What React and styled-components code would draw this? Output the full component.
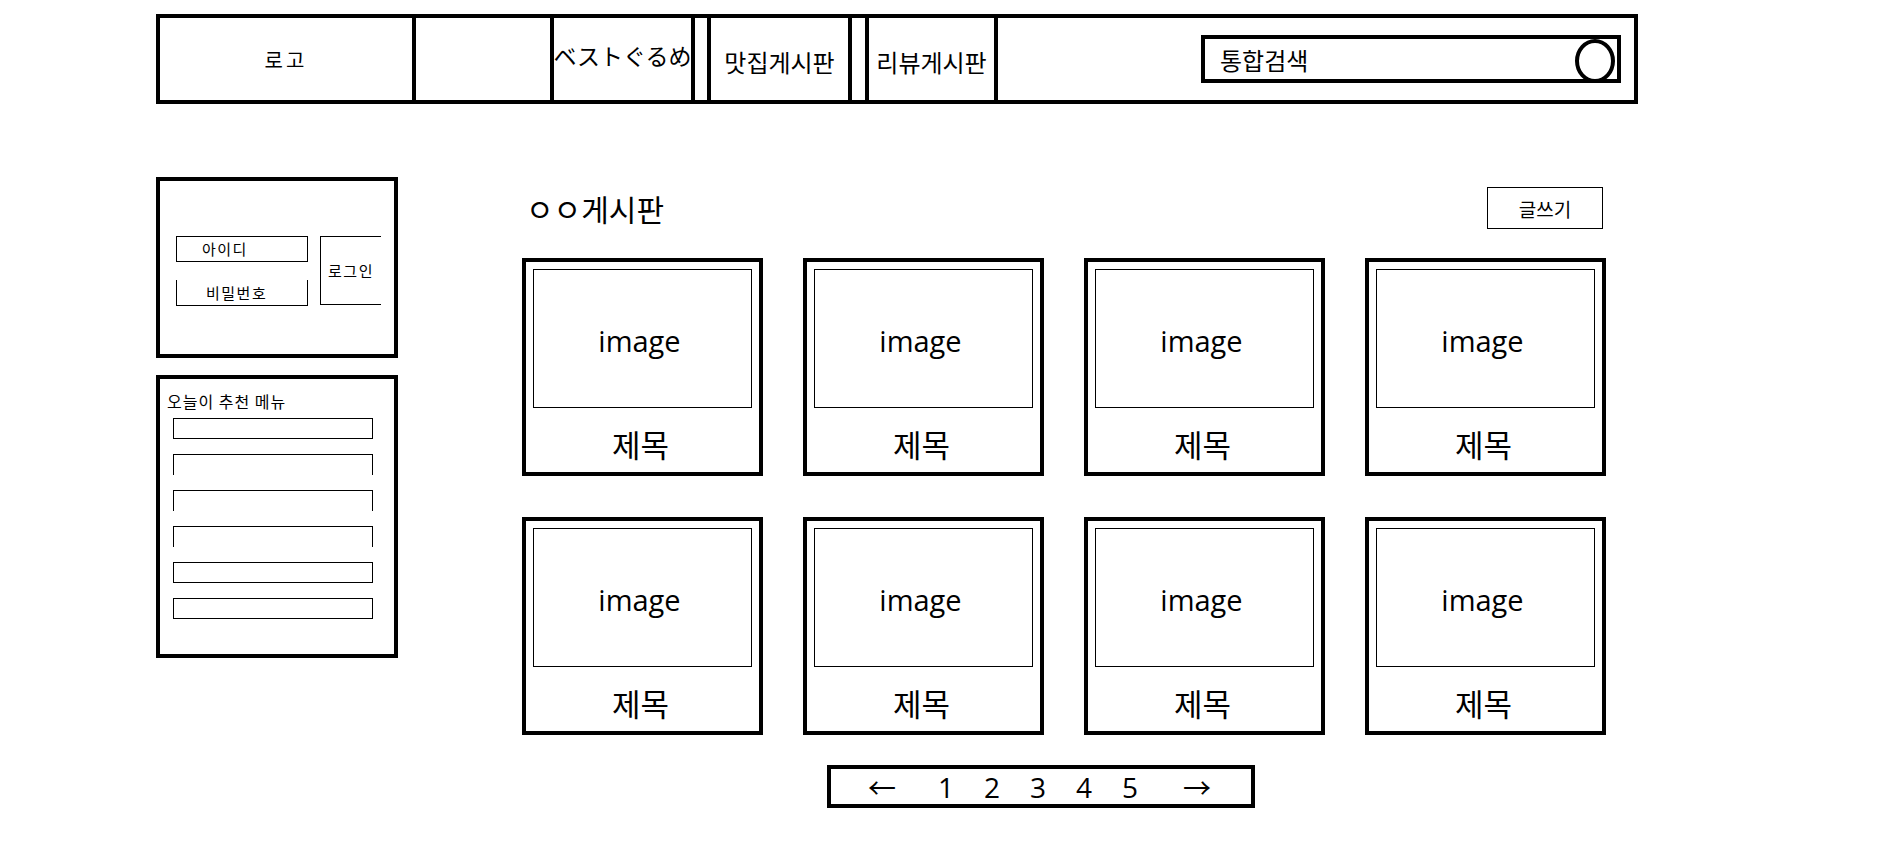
import React from "react";
import styled, { createGlobalStyle } from "styled-components";

const GlobalStyle = createGlobalStyle`
  html, body { margin: 0; padding: 0; background: #fff; }
  body { font-family: "Noto Sans CJK KR", "Noto Sans", sans-serif; color: #000; }
  * { box-sizing: border-box; }
`;

const Page = styled.div`
  width: 1900px;
  padding: 14px 0 40px 156px;
`;

const Header = styled.header`
  display: flex;
  width: 1482px;
  height: 90px;
  border: 4px solid #000;
`;

const Cell = styled.div`
  display: flex;
  align-items: center;
  justify-content: ${(p) => (p.$end ? "flex-end" : "center")};
  flex: ${(p) => (p.$grow ? "1" : "none")};
  width: ${(p) => (p.$w ? `${p.$w}px` : "auto")};
  border-right: ${(p) => (p.$last ? "none" : "4px solid #000")};
  padding: ${(p) => p.$pad || "0"};
  font-size: ${(p) => p.$size || 24}px;
  white-space: nowrap;
`;

const LogoText = styled.span`
  font-size: 20px;
  letter-spacing: 3px;
`;

const SearchBox = styled.div`
  display: flex;
  align-items: center;
  justify-content: space-between;
  width: 420px;
  height: 48px;
  border: 4px solid #000;
  padding: 0 2px 0 15px;
  font-size: 24px;
`;

const SearchCircle = styled.span`
  width: 40px;
  height: 44px;
  margin-top: 3px;
  border: 4px solid #000;
  border-radius: 50%;
`;

const Body = styled.div`
  display: flex;
  margin-top: 73px;
`;

const Sidebar = styled.aside`
  display: flex;
  flex-direction: column;
  gap: 17px;
  width: 242px;
`;

const LoginBox = styled.div`
  display: flex;
  align-items: center;
  gap: 12px;
  height: 181px;
  border: 4px solid #000;
  padding: 6px 0 0 16px;
`;

const Fields = styled.div`
  display: flex;
  flex-direction: column;
  gap: 18px;
`;

const Field = styled.div`
  display: flex;
  align-items: center;
  width: 132px;
  height: 26px;
  border: 1px solid #000;
  border-top: ${(p) => (p.$noTop ? "none" : "1px solid #000")};
  padding-left: ${(p) => p.$indent}px;
  font-size: 15px;
  letter-spacing: 1.5px;
`;

const LoginButton = styled.div`
  display: flex;
  align-items: center;
  justify-content: center;
  width: 61px;
  height: 69px;
  border: 1px solid #000;
  border-right: none;
  font-size: 15px;
  letter-spacing: 1.5px;
`;

const MenuBox = styled.div`
  height: 283px;
  border: 4px solid #000;
  padding: 10px 0 0 7px;
`;

const MenuTitle = styled.div`
  font-size: 16px;
  line-height: 24px;
  letter-spacing: 1px;
  margin-bottom: 5px;
`;

const MenuList = styled.div`
  display: flex;
  flex-direction: column;
  gap: 15px;
  padding-left: 6px;
`;

const MenuRow = styled.div`
  width: 200px;
  height: 21px;
  border: 1px solid #000;
  border-bottom: ${(p) => (p.$open ? "none" : "1px solid #000")};
`;

const Main = styled.main`
  width: 1088px;
  margin-left: 123px;
`;

const MainHead = styled.div`
  display: flex;
  align-items: center;
  justify-content: space-between;
  height: 42px;
  margin-top: 10px;
  padding-right: 6px;
`;

const BoardTitle = styled.h1`
  margin: 0;
  padding-left: 5px;
  font-size: 30px;
  font-weight: 400;
`;

const WriteButton = styled.div`
  display: flex;
  align-items: center;
  justify-content: center;
  width: 116px;
  height: 42px;
  border: 1px solid #000;
  font-size: 19px;
`;

const Grid = styled.div`
  display: grid;
  grid-template-columns: repeat(4, 241px);
  column-gap: 40px;
  row-gap: 41px;
  margin-top: 29px;
  margin-left: 1px;
`;

const Card = styled.div`
  display: flex;
  flex-direction: column;
  height: 218px;
  border: 4px solid #000;
  padding: 7px 7px 0;
`;

const ImageBox = styled.div`
  display: flex;
  align-items: center;
  justify-content: center;
  height: 139px;
  border: 1px solid #000;
  padding: 4px 6px 0 0;
  font-family: "Open Sans", "Noto Sans", sans-serif;
  font-size: 29px;
`;

const CardTitle = styled.div`
  display: flex;
  align-items: center;
  justify-content: center;
  flex: 1;
  padding: 6px 4px 0 0;
  font-size: 31px;
`;

const Pagination = styled.nav`
  display: flex;
  align-items: center;
  width: 428px;
  height: 43px;
  margin: 30px 0 0 306px;
  border: 4px solid #000;
  padding-left: 31px;
  font-family: "Open Sans", "Noto Sans CJK KR", sans-serif;
  font-size: 28px;
`;

const PageArrow = styled.span`
  width: 40px;
  text-align: center;
  margin-left: ${(p) => p.$before || 0}px;
  margin-right: ${(p) => p.$after || 0}px;
`;

const PageNum = styled.span`
  width: 46px;
  text-align: center;
`;

const cards = Array.from({ length: 8 }, (_, i) => i);
const menuRows = [false, true, true, true, false, false];

export default function App() {
  return (
    <>
      <GlobalStyle />
      <Page>
        <Header>
          <Cell $w={256}>
            <LogoText>로고</LogoText>
          </Cell>
          <Cell $w={138} />
          <Cell $w={141} $size={23} $pad="0 0 8px 0">ベストぐるめ</Cell>
          <Cell $w={16} />
          <Cell $w={141} $pad="4px 0 0 0">맛집게시판</Cell>
          <Cell $w={17} />
          <Cell $w={129} $pad="4px 0 0 0">리뷰게시판</Cell>
          <Cell $grow $last $end $pad="0 13px 0 0">
            <SearchBox>
              <span>통합검색</span>
              <SearchCircle />
            </SearchBox>
          </Cell>
        </Header>

        <Body>
          <Sidebar>
            <LoginBox>
              <Fields>
                <Field $indent={25}>아이디</Field>
                <Field $noTop $indent={29}>비밀번호</Field>
              </Fields>
              <LoginButton>로그인</LoginButton>
            </LoginBox>
            <MenuBox>
              <MenuTitle>오늘이 추천 메뉴</MenuTitle>
              <MenuList>
                {menuRows.map((open, i) => (
                  <MenuRow key={i} $open={open} />
                ))}
              </MenuList>
            </MenuBox>
          </Sidebar>

          <Main>
            <MainHead>
              <BoardTitle>ㅇㅇ게시판</BoardTitle>
              <WriteButton>글쓰기</WriteButton>
            </MainHead>
            <Grid>
              {cards.map((i) => (
                <Card key={i}>
                  <ImageBox>image</ImageBox>
                  <CardTitle>제목</CardTitle>
                </Card>
              ))}
            </Grid>
            <Pagination>
              <PageArrow $after={21}>←</PageArrow>
              {[1, 2, 3, 4, 5].map((n) => (
                <PageNum key={n}>{n}</PageNum>
              ))}
              <PageArrow $before={24}>→</PageArrow>
            </Pagination>
          </Main>
        </Body>
      </Page>
    </>
  );
}
